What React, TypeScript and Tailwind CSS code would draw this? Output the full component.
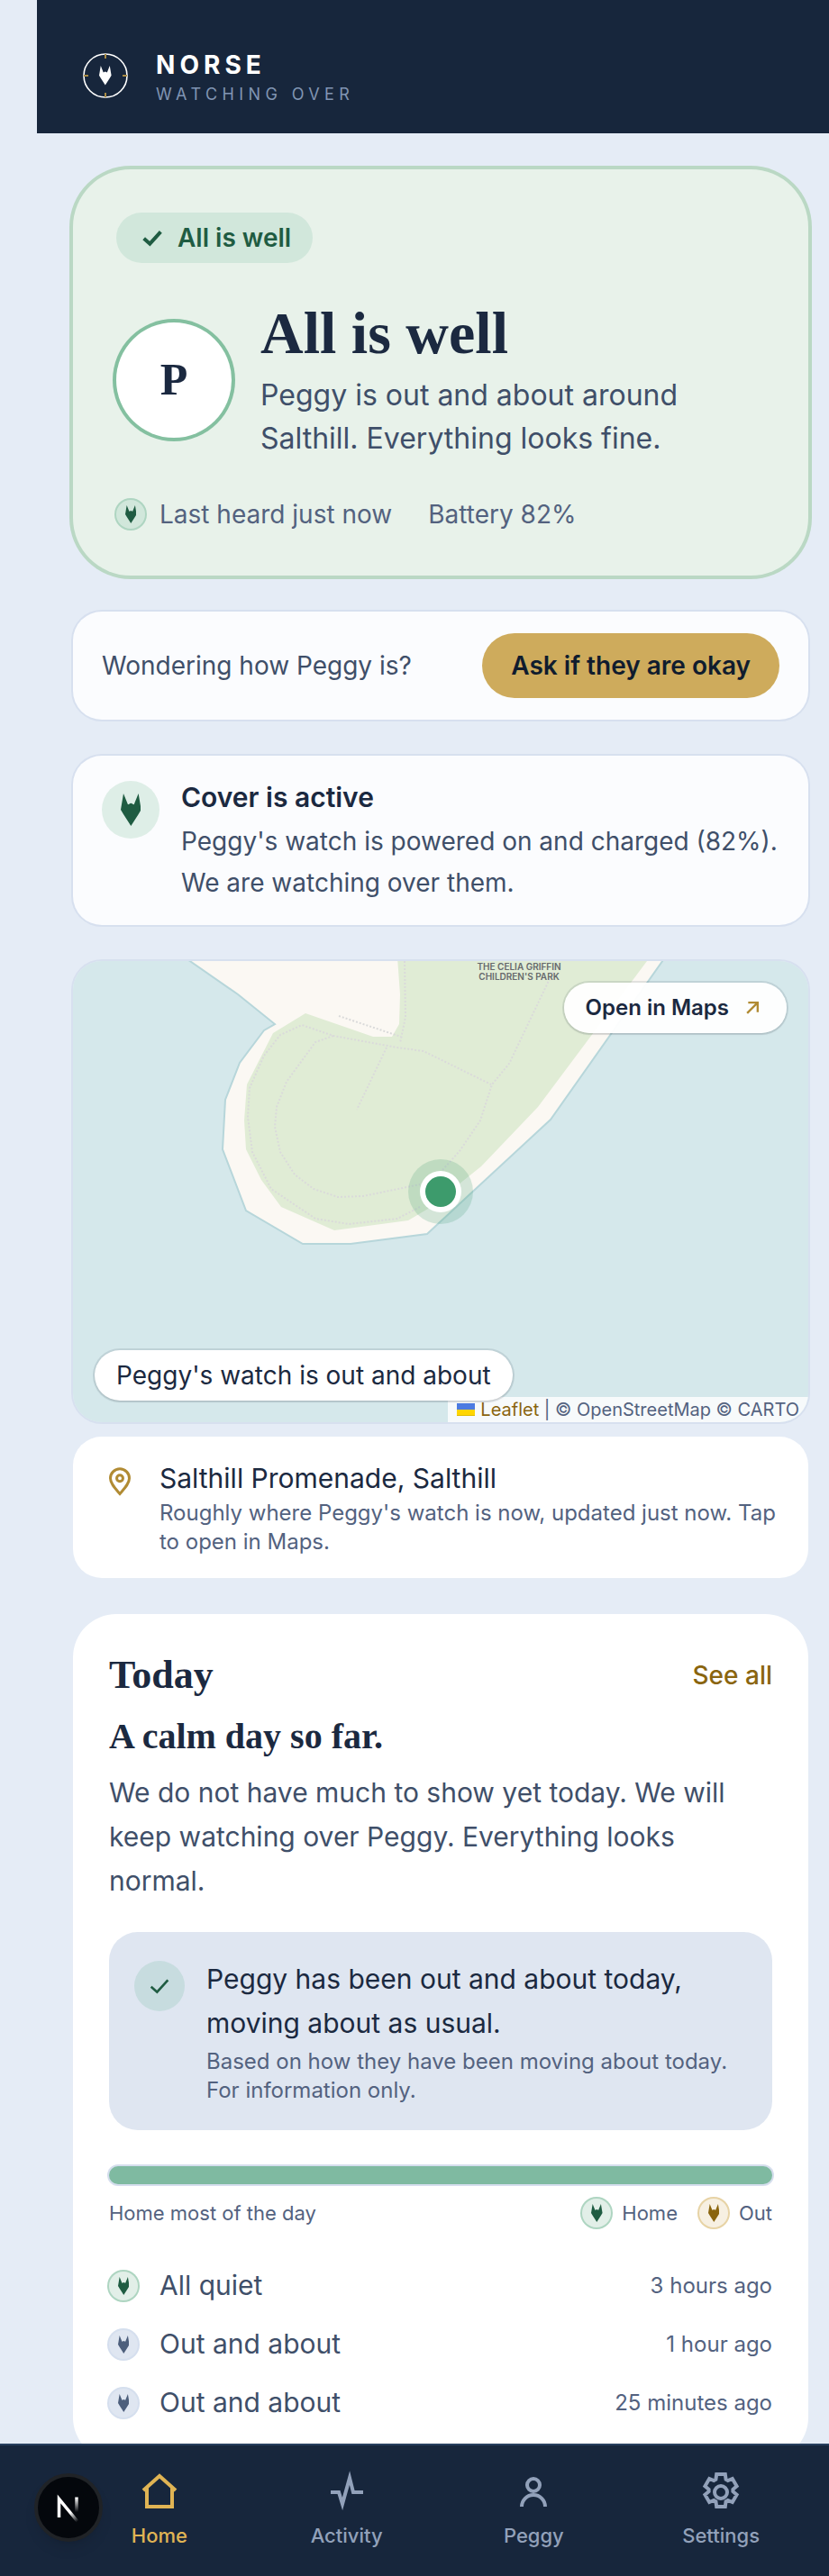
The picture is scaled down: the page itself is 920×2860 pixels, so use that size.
import type { ReactNode } from "react";

interface IconProps {
  className?: string;
}

const FoxIcon = ({ className = "" }: IconProps) => (
  <svg className={className} viewBox="0 0 68 108" fill="currentColor" aria-hidden="true">
    <path d="M9 0L24 37L28 35Q34 30 40 35L44 37L59 0L68 54L59 69L34 108L9 69L0 54Z" />
  </svg>
);

const CheckIcon = ({ className = "", strokeWidth = 3 }: IconProps & { strokeWidth?: number }) => (
  <svg className={className} viewBox="0 0 24 24" fill="none" stroke="currentColor" strokeWidth={strokeWidth} aria-hidden="true">
    <path d="M5 12.5L10 17L19 7" />
  </svg>
);

const ArrowIcon = ({ className = "" }: IconProps) => (
  <svg className={className} viewBox="0 0 24 24" fill="none" stroke="currentColor" strokeWidth="2" aria-hidden="true">
    <path d="M7 17L17 7M8 7h9v9" />
  </svg>
);

const PinIcon = ({ className = "" }: IconProps) => (
  <svg className={className} viewBox="0 0 24 24" fill="none" stroke="currentColor" strokeWidth="2" aria-hidden="true">
    <path d="M12 21c3.500-4 7-7.500 7-11.500a7 7 0 0 0-14 0C5 13.500 8.500 17 12 21z" />
    <circle cx="12" cy="9.500" r="2.300" />
  </svg>
);

const HomeIcon = () => (
  <svg className="size-12" viewBox="0 0 24 24" fill="none" stroke="currentColor" strokeWidth="2" aria-hidden="true">
    <path d="M3 11l9-8 9 8M5 9.500V20h14V9.500" />
  </svg>
);

const ActivityIcon = () => (
  <svg className="size-12" viewBox="0 0 24 24" fill="none" stroke="currentColor" strokeWidth="2" strokeMiterlimit="10" aria-hidden="true">
    <path d="M3 12h4.500l2 6.500 4-14.500 2 8H21" />
  </svg>
);

const PersonIcon = () => (
  <svg className="size-12" viewBox="0 0 24 24" fill="none" stroke="currentColor" strokeWidth="2" aria-hidden="true">
    <circle cx="12" cy="8" r="3.500" />
    <path d="M5.500 20a6.500 6.500 0 0 1 13 0" />
  </svg>
);

const SettingsIcon = () => (
  <svg className="size-12" viewBox="0 0 24 24" fill="none" stroke="currentColor" strokeWidth="2" aria-hidden="true">
    <circle cx="12" cy="12" r="3.500" />
    <path d="M9.600 2h4.800l.4 2.900 1.100.6 2.500-1 2.400 4.100-2.100 1.800v1.200l2.100 1.800-2.400 4.100-2.500-1-1.100.6-.4 2.900H9.600l-.4-2.900-1.100-.6-2.500 1-2.400-4.100 2.100-1.800v-1.200L3.200 8.600l2.400-4.100 2.500 1 1.100-.6z" />
  </svg>
);

const LogoMark = () => (
  <svg className="size-[72px] shrink-0" viewBox="0 0 72 72" aria-hidden="true">
    <circle cx="36" cy="36" r="24" fill="none" stroke="#fff" strokeWidth="1.600" />
    <path d="M36 12v5M36 55v5M12 36h5M55 36h5" stroke="#a98b45" strokeWidth="2" />
    <path
      transform="translate(29 25) scale(.2)"
      d="M9 0L24 37L28 35Q34 30 40 35L44 37L59 0L68 54L59 69L34 108L9 69L0 54Z"
      fill="#fff"
    />
  </svg>
);

const tones = {
  green: "bg-[#e2efe8] text-[#1f5c42] ring-[#aed5c1]",
  mint: "bg-[#d1e7db] text-[#1f5c42] ring-[#aed5c1]",
  gold: "bg-[#f7f0e2] text-[#8a650f] ring-[#e7d3a5]",
  blue: "bg-[#dfe6f1] text-[#4d5f7c] ring-[#d5dfee]",
};

function FoxBadge({ tone }: { tone: keyof typeof tones }) {
  return (
    <span className={`flex size-8 shrink-0 items-center justify-center rounded-full ring-2 ${tones[tone]}`}>
      <FoxIcon className="h-5" />
    </span>
  );
}

function Card({ children, className = "" }: { children: ReactNode; className?: string }) {
  return (
    <section className={`rounded-[32px] bg-[#fbfcfe] px-8 py-6 ring-2 ring-[#d7e0ef] ${className}`}>
      {children}
    </section>
  );
}

const footpaths = [
  "M368 0L369 62L363 91",
  "M295 61L364 84",
  "M385 273L360 286L306 292L269 286L220 253L199 212L194 173L196 141L212 105L230 82L254 71L289 83L360 96L389 100L464 137",
  "M289 83L269 90L237 134L226 162L224 184L230 212L246 237L267 253L294 262L322 261L385 248",
  "M348 96L315 165",
  "M536 5L484 114L465 137L452 177L429 211L410 232",
];

function MapDrawing() {
  return (
    <svg className="h-full w-full" viewBox="0 0 816 512" preserveAspectRatio="xMidYMid slice" role="img" aria-label="Map of Salthill">
      <rect width="816" height="512" fill="#d5e8eb" />
      <path
        d="M124 -4L183 37L224 70L212 77L185 113L169 154L166 209L192 277L255 314H308L393 303L530 176L657 -4Z"
        fill="#fbf8f3"
        stroke="#b7d6da"
        strokeWidth="2"
      />
      <path
        d="M360 -4L363 37L362 70L354 84H333L258 58L222 80L193 137L190 177L192 209L209 243L231 273L290 299L372 288L394 275L453 228L516 162L640 -4Z"
        fill="#e0ecd5"
      />
      {footpaths.map((d) => (
        <path key={d} d={d} fill="none" stroke="#dadada" strokeWidth="2" strokeDasharray="2 2" />
      ))}
      <g fill="#66696c" fontSize="10" fontWeight="600" textAnchor="middle">
        <text x="495" y="10">THE CELIA GRIFFIN</text>
        <text x="495" y="21">CHILDREN'S PARK</text>
      </g>
      <circle cx="408" cy="256" r="36" fill="#3d9b6c" fillOpacity=".2" />
      <circle cx="408" cy="256" r="23" fill="#fff" />
      <circle cx="408" cy="256" r="17" fill="#3d9b6c" />
    </svg>
  );
}

const events: { label: string; time: string; tone: keyof typeof tones }[] = [
  { label: "All quiet", time: "3 hours ago", tone: "green" },
  { label: "Out and about", time: "1 hour ago", tone: "blue" },
  { label: "Out and about", time: "25 minutes ago", tone: "blue" },
];

const navItems = [
  { label: "Home", icon: <HomeIcon />, active: true },
  { label: "Activity", icon: <ActivityIcon />, active: false },
  { label: "Peggy", icon: <PersonIcon />, active: false },
  { label: "Settings", icon: <SettingsIcon />, active: false },
];

function Hero() {
  return (
    <section className="rounded-[64px] bg-[#e8f2ea] p-12 ring-4 ring-[#bad8c4]">
      <div className="inline-flex h-14 items-center gap-3 rounded-full bg-[#d1e7db] px-6 text-[28px] font-semibold text-[#1f5c42]">
        <CheckIcon className="size-8" />
        All is well
      </div>
      <div className="mt-10 flex items-center gap-8">
        <div className="flex size-32 shrink-0 items-center justify-center rounded-full bg-white font-['Liberation_Serif',serif] text-[50px] font-bold ring-4 ring-[#84c0a0]">
          P
        </div>
        <div>
          <h1 className="font-['Liberation_Serif',serif] text-[66px] leading-[75px] font-bold">All is well</h1>
          <p className="mt-2 text-[32px] leading-12 text-[#3f4f69]">
            Peggy is out and about around Salthill. Everything looks fine.
          </p>
        </div>
      </div>
      <div className="mt-10 flex items-center gap-10 text-[28px] leading-10 text-[#53627f]">
        <span className="flex items-center gap-4">
          <FoxBadge tone="mint" />
          Last heard just now
        </span>
        <span>Battery 82%</span>
      </div>
    </section>
  );
}

function LocationMap() {
  return (
    <div>
      <div className="relative h-[512px] overflow-hidden rounded-[32px] ring-2 ring-[#d7e0ef]">
        <MapDrawing />
        <div className="absolute right-0 bottom-0 flex h-7 items-center bg-white/80 px-2.5 text-[20px] text-[#53627f]">
          <svg className="mr-1.5 h-3.5 w-5" viewBox="0 0 20 14" aria-hidden="true">
            <path fill="#4c7be1" d="M0 0h20v7H0z" />
            <path fill="#ffd500" d="M0 7h20v6H0z" />
            <path fill="#e0bc00" d="M0 13h20v1H0z" />
          </svg>
          <a href="#leaflet" className="text-[#8a650f]">Leaflet</a>
          <span className="whitespace-pre"> | © OpenStreetMap © CARTO</span>
        </div>
        <a
          href="#maps"
          className="absolute top-6 right-6 flex h-14 items-center gap-3 rounded-full bg-white/95 px-6 text-[24px] font-semibold shadow-sm ring-2 ring-[#17263c]/10"
        >
          Open in Maps
          <ArrowIcon className="size-7 text-[#b18b33]" />
        </a>
        <p className="absolute bottom-6 left-6 flex h-14 items-center rounded-full bg-white px-6 text-[28px] shadow-sm ring-2 ring-[#17263c]/10">
          Peggy's watch is out and about
        </p>
      </div>
      <a href="#maps" className="mt-4 flex gap-6 rounded-[32px] bg-white px-8 py-6">
        <span className="mt-1.5 flex size-10 shrink-0 items-center justify-center text-[#b18b33]">
          <PinIcon className="size-9" />
        </span>
        <span className="flex flex-col">
          <span className="text-[30px] leading-[45px]">Salthill Promenade, Salthill</span>
          <span className="text-[24px] leading-8 text-[#53627f]">
            Roughly where Peggy's watch is now, updated just now. Tap to open in Maps.
          </span>
        </span>
      </a>
    </div>
  );
}

function Today() {
  return (
    <section className="rounded-[48px] bg-white p-10">
      <div className="flex items-center justify-between">
        <h2 className="font-['Liberation_Serif',serif] text-[44px] leading-[56px] font-bold">Today</h2>
        <a href="#activity" className="text-[28px] leading-10 font-medium text-[#8a650f]">See all</a>
      </div>
      <h3 className="mt-4 font-['Liberation_Serif',serif] text-[40px] leading-12 font-bold">A calm day so far.</h3>
      <p className="mt-3.5 text-[30px] leading-[49px] text-[#3f4f69]">
        We do not have much to show yet today. We will keep watching over Peggy. Everything looks normal.
      </p>
      <div className="mt-8 flex gap-6 rounded-[32px] bg-[#dfe6f1] p-7">
        <span className="mt-1 flex size-14 shrink-0 items-center justify-center rounded-full bg-[#c7dcdf] text-[#1f5c42]">
          <CheckIcon className="size-8" strokeWidth={2} />
        </span>
        <div>
          <p className="text-[30px] leading-[49px]">Peggy has been out and about today, moving about as usual.</p>
          <p className="mt-0.5 text-[24px] leading-8 text-[#53627f]">
            Based on how they have been moving about today. For information only.
          </p>
        </div>
      </div>
      <div className="mt-10 h-5 rounded-full bg-[#7fbaa1] ring-2 ring-[#d5deed]" />
      <div className="mt-4 flex items-center justify-between text-[22px] leading-8 text-[#53627f]">
        <span>Home most of the day</span>
        <div className="flex gap-6">
          <span className="flex items-center gap-3">
            <FoxBadge tone="green" />
            Home
          </span>
          <span className="flex items-center gap-3">
            <FoxBadge tone="gold" />
            Out
          </span>
        </div>
      </div>
      <ul className="mt-10 flex flex-col gap-4">
        {events.map((event) => (
          <li key={event.time} className="flex items-center gap-6">
            <FoxBadge tone={event.tone} />
            <span className="flex-1 text-[30px] leading-[49px] text-[#3f4f69]">{event.label}</span>
            <span className="text-[24px] leading-8 text-[#53627f]">{event.time}</span>
          </li>
        ))}
      </ul>
    </section>
  );
}

function BottomNav() {
  return (
    <nav className="fixed inset-x-0 bottom-0 border-t-2 border-[#28405f] bg-[#17263c] pt-7 pr-4 pb-[29px] pl-[73px]">
      <div className="grid grid-cols-4">
        {navItems.map((item) => (
          <a
            key={item.label}
            href="#"
            className={`flex flex-col items-center gap-2 text-[22px] leading-8 font-medium ${
              item.active ? "text-[#e0b454]" : "text-[#92a1ba]"
            }`}
          >
            {item.icon}
            {item.label}
          </a>
        ))}
      </div>
    </nav>
  );
}

function DevToolsButton() {
  return (
    <button
      type="button"
      aria-label="Open dev tools"
      className="fixed bottom-[38px] left-[38px] flex size-[76px] items-center justify-center rounded-full border-4 border-[#202327] bg-[#04070c] shadow-lg"
    >
      <svg className="size-10" viewBox="0 0 40 40" fill="none" aria-hidden="true">
        <defs>
          <linearGradient id="diagonal" x1="24" y1="24" x2="32" y2="34" gradientUnits="userSpaceOnUse">
            <stop stopColor="#fff" />
            <stop offset="1" stopColor="#fff" stopOpacity="0" />
          </linearGradient>
          <linearGradient id="stem" x1="29" y1="9" x2="29" y2="25" gradientUnits="userSpaceOnUse">
            <stop stopColor="#fff" />
            <stop offset="1" stopColor="#fff" stopOpacity="0" />
          </linearGradient>
        </defs>
        <path d="M9.500 31V10.500L30.500 36" stroke="url(#diagonal)" strokeWidth="3.500" />
        <path d="M29 8.500V25" stroke="url(#stem)" strokeWidth="3.500" />
      </svg>
    </button>
  );
}

export default function App() {
  return (
    <div className="min-h-screen bg-[#e5ecf6] pb-32 pl-[41px] font-[Inter,sans-serif] text-[#1b2940]">
      <header className="flex items-center gap-5 bg-[#17263c] px-10 pt-12 pb-7">
        <LogoMark />
        <div>
          <p className="text-[28px] leading-[42px] font-bold tracking-[0.18em] text-white">NORSE</p>
          <p className="text-[18px] leading-6 tracking-[0.3em] text-[#8195b3]">WATCHING OVER</p>
        </div>
      </header>
      <main className="flex flex-col gap-10 pt-10 pr-[23px] pl-10">
        <Hero />
        <Card className="flex items-center justify-between gap-6">
          <p className="text-[28px] text-[#3f4f69]">Wondering how Peggy is?</p>
          <button type="button" className="h-[72px] rounded-full bg-[#ceab5c] px-8 text-[28px] font-semibold text-[#101c2e]">
            Ask if they are okay
          </button>
        </Card>
        <Card className="flex gap-6">
          <span className="mt-1 flex size-16 shrink-0 items-center justify-center rounded-full bg-[#deeee7] text-[#1f5c42]">
            <FoxIcon className="h-9" />
          </span>
          <div>
            <h2 className="text-[30px] leading-11 font-semibold">Cover is active</h2>
            <p className="mt-1 text-[28px] leading-[46px] text-[#3f4f69]">
              Peggy's watch is powered on and charged (82%). We are watching over them.
            </p>
          </div>
        </Card>
        <LocationMap />
        <Today />
      </main>
      <BottomNav />
      <DevToolsButton />
    </div>
  );
}
